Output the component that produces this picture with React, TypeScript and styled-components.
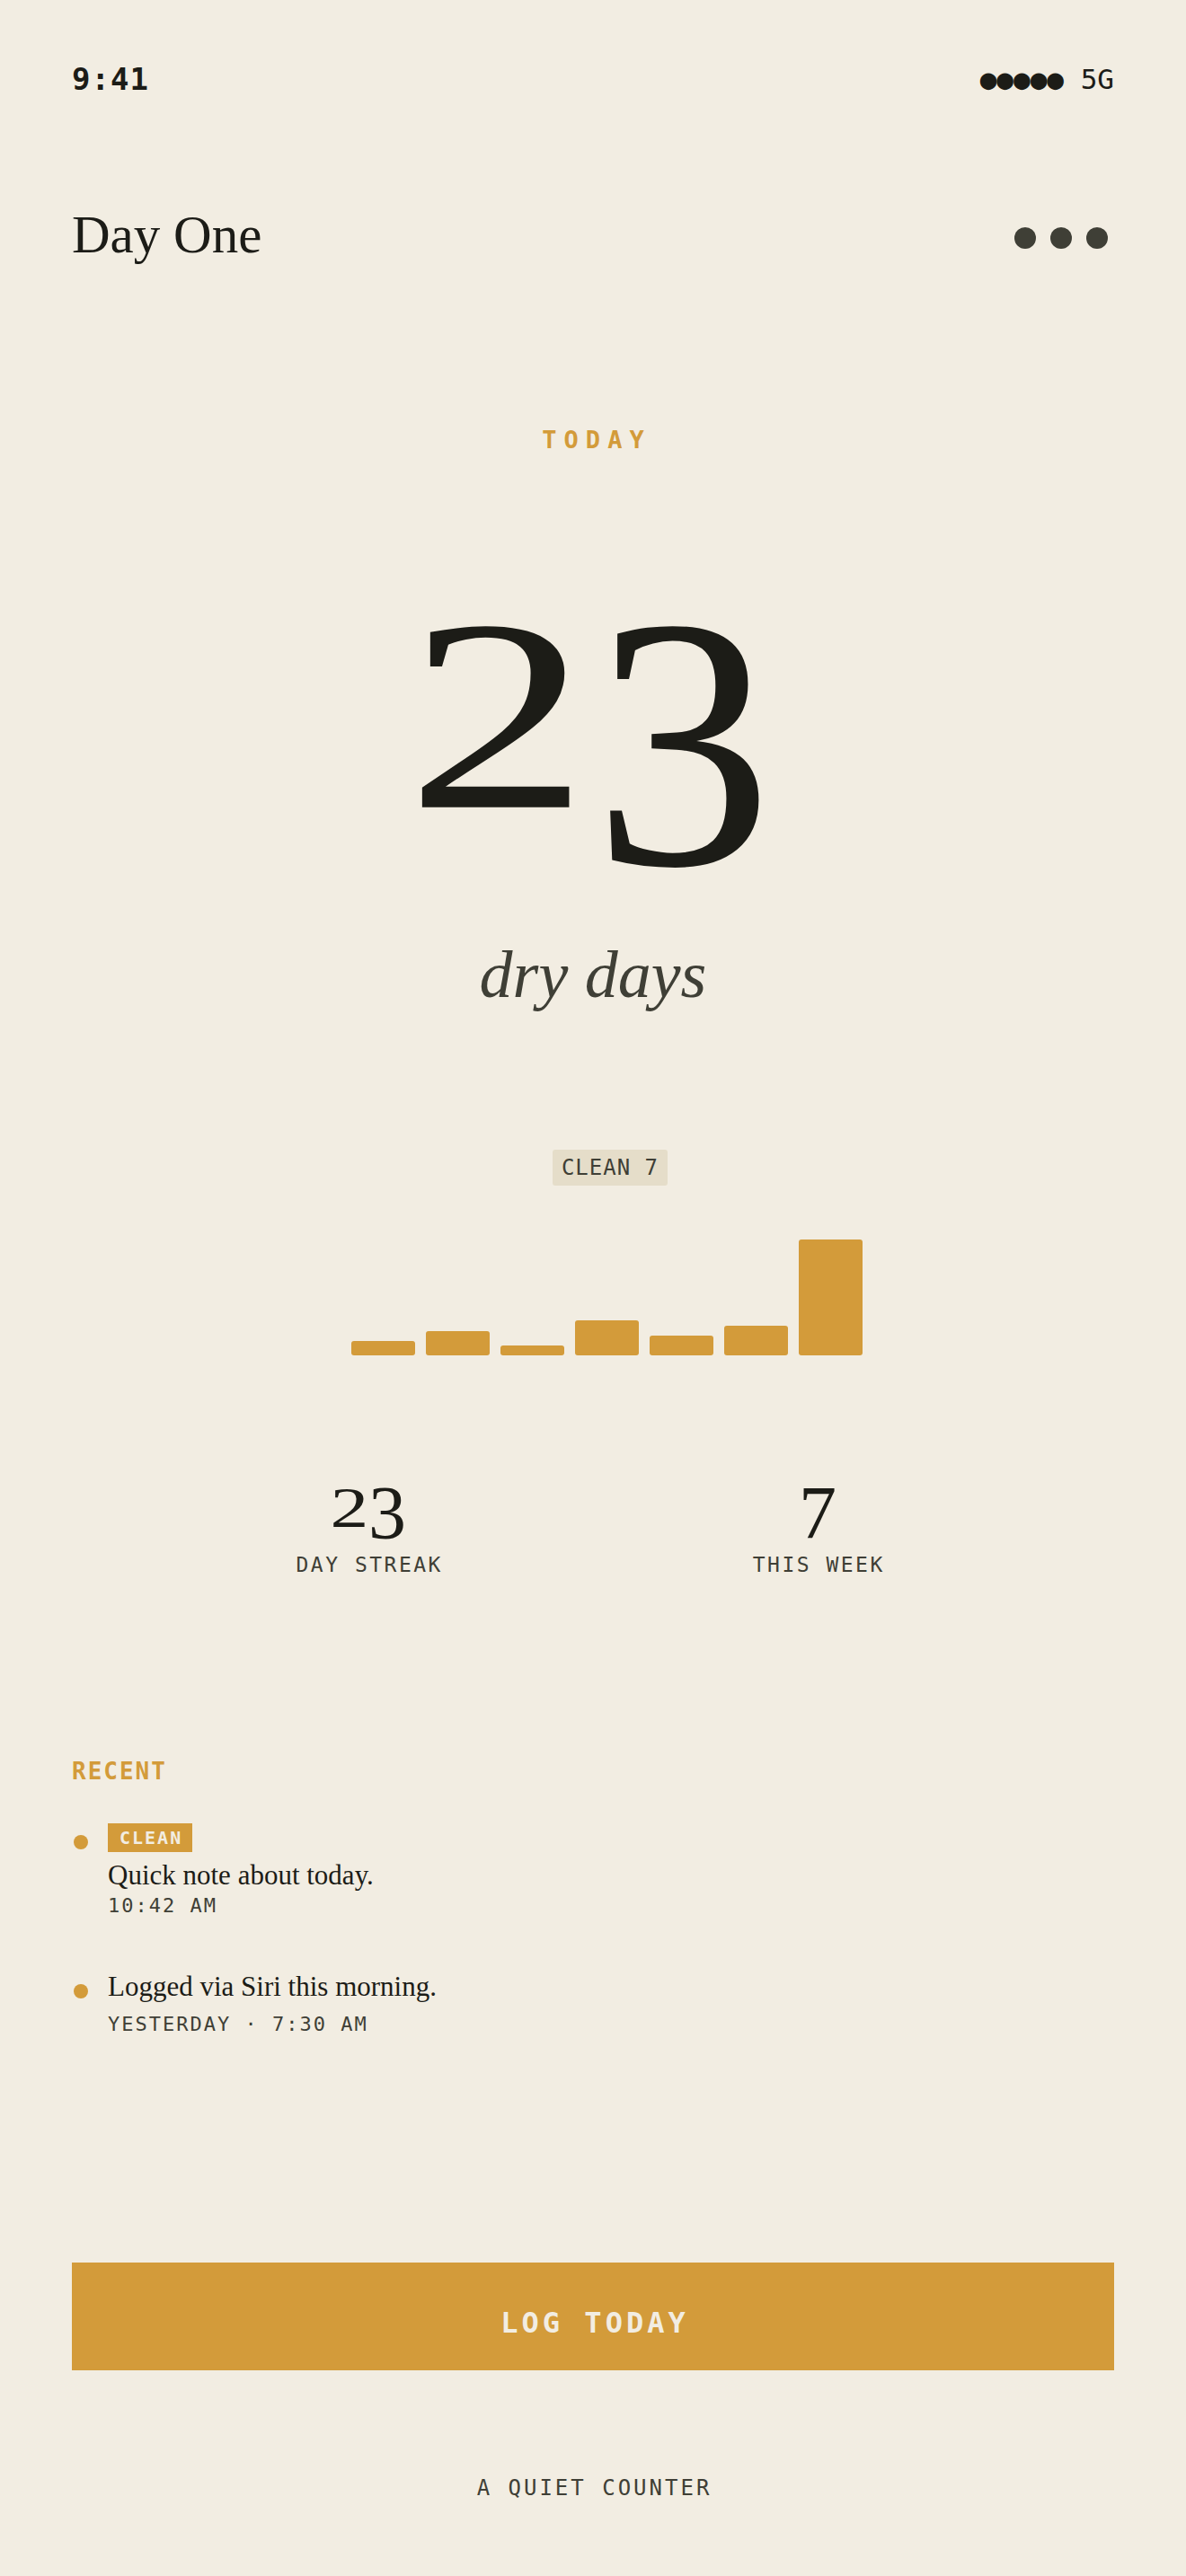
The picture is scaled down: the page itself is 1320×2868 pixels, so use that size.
import React from 'react';
import styled, {createGlobalStyle} from 'styled-components';

const ink = '#1c1c17';
const muted = '#3f3f36';
const amber = '#d39b3a';
const paper = '#f2ede2';
const mono = '"DejaVu Sans Mono", "Liberation Mono", monospace';
const serif = '"Liberation Serif", "DejaVu Serif", serif';

const GlobalStyle = createGlobalStyle`
  html, body {
    margin: 0;
    padding: 0;
    background: ${paper};
  }

  * {
    box-sizing: border-box;
  }
`;

const bars = [16, 27, 11, 39, 22, 33, 129];

const recent = [
    {id: 1, tag: 'CLEAN', note: 'Quick note about today.', meta: '10:42 AM'},
    {id: 2, tag: '', note: 'Logged via Siri this morning.', meta: 'YESTERDAY · 7:30 AM'},
];

// the design uses old-style figures: the "2" sits at x-height, the "3" drops
const OldStyle = ({value}: { value: string }) => (
    <>
        {value.split('').map((ch, i) => (
            <Figure key={i} $short={'012'.includes(ch)}>{ch}</Figure>
        ))}
    </>
);

const App = () => {
    return (
        <Page>
            <GlobalStyle/>
            <StatusBar>
                <Clock>9:41</Clock>
                <Signal>●●●●● 5G</Signal>
            </StatusBar>

            <Header>
                <Title>Day One</Title>
                <MenuButton aria-label='More'>
                    <Dot/>
                    <Dot/>
                    <Dot/>
                </MenuButton>
            </Header>

            <Hero>
                <Eyebrow>TODAY</Eyebrow>
                <BigCount><OldStyle value='23'/></BigCount>
                <CountLabel>dry days</CountLabel>
            </Hero>

            <ChartBlock>
                <Chip>CLEAN 7</Chip>
                <Chart>
                    {bars.map((h, i) => (
                        <Bar key={i} style={{height: h}}/>
                    ))}
                </Chart>
            </ChartBlock>

            <Stats>
                <Stat>
                    <StatValue><OldStyle value='23'/></StatValue>
                    <StatLabel>DAY STREAK</StatLabel>
                </Stat>
                <Stat>
                    <StatValue>7</StatValue>
                    <StatLabel>THIS WEEK</StatLabel>
                </Stat>
            </Stats>

            <Section>
                <SectionTitle>RECENT</SectionTitle>
                <List>
                    {recent.map(item => (
                        <Entry key={item.id}>
                            <Bullet/>
                            <EntryBody>
                                {item.tag && <Tag>{item.tag}</Tag>}
                                <Note $tagged={!!item.tag}>{item.note}</Note>
                                <Meta $tight={!!item.tag}>{item.meta}</Meta>
                            </EntryBody>
                        </Entry>
                    ))}
                </List>
            </Section>

            <LogButton>LOG TODAY</LogButton>
            <Footer>A QUIET COUNTER</Footer>
        </Page>
    );
};

const Page = styled.div`
  width: 1320px;
  min-height: 2868px;
  padding: 0 80px;
  display: flex;
  flex-direction: column;
  background: ${paper};
  color: ${ink};
`;

const StatusBar = styled.div`
  margin-top: 71px;
  height: 34px;
  display: flex;
  justify-content: space-between;
  align-items: center;
`;

const Clock = styled.span`
  font-family: ${mono};
  font-weight: bold;
  font-size: 34px;
  line-height: 1;
  letter-spacing: 1px;
`;

const Signal = styled.span`
  font-family: ${mono};
  font-size: 31px;
  line-height: 1;
`;

const Header = styled.header`
  margin-top: 127px;
  height: 58px;
  display: flex;
  justify-content: space-between;
  align-items: center;
`;

const Title = styled.h1`
  margin: 0;
  font-family: ${serif};
  font-weight: normal;
  font-size: 59px;
  line-height: 1;
`;

const MenuButton = styled.button`
  display: flex;
  gap: 16px;
  margin: 8px 7px 0 0;
  padding: 0;
  border: 0;
  background: none;
  cursor: pointer;
`;

const Dot = styled.span`
  width: 24px;
  height: 24px;
  border-radius: 50%;
  background: ${muted};
`;

const Hero = styled.section`
  display: flex;
  flex-direction: column;
  align-items: center;
`;

const Eyebrow = styled.div`
  margin-top: 186px;
  padding-left: 8px;
  font-family: ${mono};
  font-weight: bold;
  font-size: 27px;
  line-height: 1;
  letter-spacing: 8px;
  color: ${amber};
`;

const BigCount = styled.div`
  margin-top: 125px;
  font-family: ${serif};
  font-size: 400px;
  line-height: 1;
  letter-spacing: 6px;
  color: ${ink};
`;

const Figure = styled.span<{ $short: boolean }>`
  display: inline-block;
  transform: ${p => (p.$short ? 'scale(1.02, 0.76)' : 'none')};
  transform-origin: 50% 0.175em;
`;

const CountLabel = styled.div`
  margin-top: 20px;
  font-family: ${serif};
  font-style: italic;
  font-size: 74px;
  line-height: 1;
  color: ${muted};
`;

const ChartBlock = styled.section`
  margin-top: 158px;
  padding-left: 30px;
  display: flex;
  flex-direction: column;
  align-items: center;
`;

const Chip = styled.div`
  height: 40px;
  margin-left: 8px;
  padding: 0 10px;
  display: flex;
  align-items: center;
  border-radius: 3px;
  background: #e5ddc9;
  font-family: ${mono};
  font-size: 24px;
  letter-spacing: 1px;
  color: ${muted};
`;

const Chart = styled.div`
  margin-top: 49px;
  height: 140px;
  display: flex;
  align-items: flex-end;
  gap: 12px;
`;

const Bar = styled.div`
  width: 71px;
  border-radius: 3px;
  background: ${amber};
`;

const Stats = styled.section`
  margin: 134px auto 0;
  width: 1000px;
  display: grid;
  grid-template-columns: 1fr 1fr;
`;

const Stat = styled.div`
  display: flex;
  flex-direction: column;
  align-items: center;
`;

const StatValue = styled.div`
  font-family: ${serif};
  font-size: 84px;
  line-height: 1;
`;

const StatLabel = styled.div`
  margin-top: 4px;
  padding-left: 2.5px;
  font-family: ${mono};
  font-size: 23px;
  line-height: 1;
  letter-spacing: 2.5px;
  color: ${muted};
`;

const Section = styled.section`
  margin-top: 205px;
`;

const SectionTitle = styled.h2`
  margin: 0;
  font-family: ${mono};
  font-weight: bold;
  font-size: 26px;
  line-height: 1;
  letter-spacing: 2px;
  color: ${amber};
`;

const List = styled.div`
  margin-top: 45px;
  display: flex;
  flex-direction: column;
  gap: 63px;
`;

const Entry = styled.div`
  display: flex;
  align-items: flex-start;
  gap: 22px;
`;

const Bullet = styled.span`
  flex: none;
  width: 16px;
  height: 16px;
  margin: 13px 0 0 2px;
  border-radius: 50%;
  background: ${amber};
`;

const EntryBody = styled.div`
  display: flex;
  flex-direction: column;
  align-items: flex-start;
`;

const Tag = styled.span`
  height: 32px;
  padding: 0 11px 0 13px;
  display: flex;
  align-items: center;
  background: ${amber};
  font-family: ${mono};
  font-weight: bold;
  font-size: 20px;
  letter-spacing: 2px;
  color: ${paper};
`;

const Note = styled.p<{ $tagged: boolean }>`
  margin: ${p => (p.$tagged ? '10px' : '0')} 0 0;
  font-family: ${serif};
  font-size: 31px;
  line-height: 1;
  color: ${ink};
`;

const Meta = styled.span<{ $tight: boolean }>`
  margin-top: ${p => (p.$tight ? '8px' : '16px')};
  font-family: ${mono};
  font-size: 22px;
  line-height: 1;
  letter-spacing: 2px;
  color: ${muted};
`;

const LogButton = styled.button`
  margin-top: 254px;
  width: 100%;
  height: 120px;
  padding: 14px 0 0 4px;
  border: 0;
  border-radius: 0;
  background: ${amber};
  font-family: ${mono};
  font-weight: bold;
  font-size: 32px;
  letter-spacing: 4px;
  color: ${paper};
  cursor: pointer;
`;

const Footer = styled.footer`
  margin-top: 119px;
  padding-left: 3px;
  text-align: center;
  font-family: ${mono};
  font-size: 24px;
  line-height: 1;
  letter-spacing: 3px;
  color: ${muted};
`;

export default App;
